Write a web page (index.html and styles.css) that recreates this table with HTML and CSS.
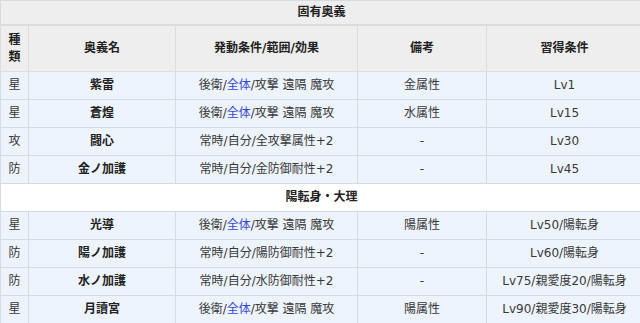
FILE: index.html
```html
<!DOCTYPE html>
<html lang="ja">
<head>
<meta charset="utf-8">
<title>固有奥義</title>
<link rel="stylesheet" href="styles.css">
</head>
<body>
<div class="wrap">
<table class="skills">
  <colgroup>
    <col class="c-kind">
    <col class="c-name">
    <col class="c-eff">
    <col class="c-note">
    <col class="c-req">
  </colgroup>
  <tr class="title"><th colspan="5">固有奥義</th></tr>
  <tr class="head">
    <th>種類</th>
    <th>奥義名</th>
    <th>発動条件/範囲/効果</th>
    <th>備考</th>
    <th>習得条件</th>
  </tr>
  <tr class="row"><td class="kind">星</td><td class="name">紫雷</td><td>後衛/<span class="link">全体</span>/攻撃 遠隔 魔攻</td><td>金属性</td><td>Lv1</td></tr>
  <tr class="row"><td class="kind">星</td><td class="name">蒼煌</td><td>後衛/<span class="link">全体</span>/攻撃 遠隔 魔攻</td><td>水属性</td><td>Lv15</td></tr>
  <tr class="row"><td class="kind">攻</td><td class="name">闘心</td><td>常時/自分/全攻撃属性+2</td><td>-</td><td>Lv30</td></tr>
  <tr class="row"><td class="kind">防</td><td class="name">金ノ加護</td><td>常時/自分/金防御耐性+2</td><td>-</td><td>Lv45</td></tr>
  <tr class="section"><th colspan="5">陽転身・大理</th></tr>
  <tr class="row"><td class="kind">星</td><td class="name">光導</td><td>後衛/<span class="link">全体</span>/攻撃 遠隔 魔攻</td><td>陽属性</td><td>Lv50/陽転身</td></tr>
  <tr class="row"><td class="kind">防</td><td class="name">陽ノ加護</td><td>常時/自分/陽防御耐性+2</td><td>-</td><td>Lv60/陽転身</td></tr>
  <tr class="row"><td class="kind">防</td><td class="name">水ノ加護</td><td>常時/自分/水防御耐性+2</td><td>-</td><td>Lv75/親愛度20/陽転身</td></tr>
  <tr class="row"><td class="kind">星</td><td class="name">月讀宮</td><td>後衛/<span class="link">全体</span>/攻撃 遠隔 魔攻</td><td>陽属性</td><td>Lv90/親愛度30/陽転身</td></tr>
</table>
</div>
</body>
</html>
```
FILE: styles.css
```css
html, body {
  margin: 0;
  padding: 0;
  background: #ffffff;
  overflow: hidden;
}
.wrap {
  width: 640px;
  height: 323px;
  overflow: hidden;
}
.skills {
  width: 642px;
  table-layout: fixed;
  border-collapse: collapse;
  font-family: "DejaVu Sans", "Noto Sans CJK JP", sans-serif;
  font-size: 12px;
  line-height: 17px;
  color: #383838;
}
.c-kind { width: 28px; }
.c-name { width: 147px; }
.c-eff { width: 182px; }
.c-note { width: 129px; }
.c-req { width: 156px; }

.skills th, .skills td {
  border: 1px solid #d6dbe2;
  padding: 0 2px;
  text-align: center;
  vertical-align: middle;
}
.skills th {
  font-weight: bold;
  color: #222222;
}
.title th {
  height: 23px;
  background: #eeeeee;
  border-bottom: 2px solid #dcdcdc;
}
.head th {
  height: 45px;
  background: #eeeeee;
  border-color: #dddddd;
}
.row td {
  height: 27px;
  background: #eef4fd;
}
.row .kind {
  padding: 0;
}
.row .name {
  font-weight: bold;
  color: #222222;
}
.section th {
  height: 27px;
  background: #ffffff;
}
.link {
  color: #3346d6;
}
```
